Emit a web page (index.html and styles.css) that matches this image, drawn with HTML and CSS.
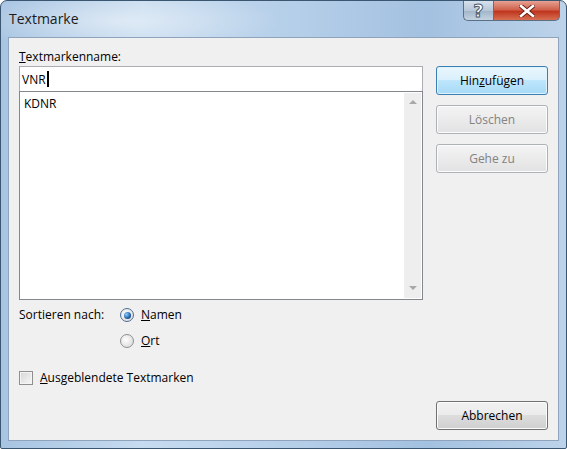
FILE: index.html
```html
<!DOCTYPE html>
<html lang="de">
<head>
  <meta charset="UTF-8" />
  <title>Textmarke</title>
  <link rel="stylesheet" href="styles.css">
</head>
<body>
  <div class="window">
    <div class="titlebar">
      <span class="title">Textmarke</span>
      <div class="caption">
        <span class="cap-btn help">?</span>
        <span class="cap-btn close">
          <svg width="16" height="12" viewBox="0 0 16 12">
            <path d="M2 1 L14 11 M14 1 L2 11" stroke="#6b1a10" stroke-width="4.4" stroke-linecap="square"/>
            <path d="M2 1 L14 11 M14 1 L2 11" stroke="#fff" stroke-width="2.6" stroke-linecap="square"/>
          </svg>
        </span>
      </div>
    </div>

    <div class="client">
      <div class="main">
        <label class="field-label"><u>T</u>extmarkenname:</label>
        <div class="name-input">VNR<span class="caret"></span></div>
        <div class="list">
          <div class="items">
            <div class="item">KDNR</div>
          </div>
          <div class="scrollbar">
            <span class="arrow up"></span>
            <span class="arrow down"></span>
          </div>
        </div>

        <div class="sort">
          <span class="sort-label">Sortieren nach:</span>
          <div class="radios">
            <div class="option"><span class="radio checked"></span><u>N</u>amen</div>
            <div class="option"><span class="radio"></span><u>O</u>rt</div>
          </div>
        </div>

        <div class="option hidden-marks"><span class="check"></span><u>A</u>usgeblendete Textmarken</div>
      </div>

      <div class="side">
        <button class="btn default">Hin<u>z</u>ufügen</button>
        <button class="btn" disabled>Löschen</button>
        <button class="btn" disabled>Gehe zu</button>
        <button class="btn cancel">Abbrechen</button>
      </div>
    </div>
  </div>
</body>
</html>
```

FILE: styles.css
```css
body {
  margin: 0;
  font-family: "Open Sans", "Noto Sans", sans-serif;
  font-size: 12px;
  color: #000;
  background: #fff;
}
.window {
  width: 567px;
  height: 449px;
  box-sizing: border-box;
  padding: 0 7px 7px 7px;
  display: flex;
  flex-direction: column;
  border: 1px solid #3b5670;
  border-radius: 7px 7px 2px 2px;
  background:
    radial-gradient(ellipse 160px 30px at 120px 20px, rgba(255,255,255,0.45), rgba(255,255,255,0) 100%),
    linear-gradient(to right, #a7c4e2 0%, #c6dbef 25%, #b3cde8 55%, #a3c1e0 75%, #bcd3ea 100%);
}
.titlebar {
  height: 36px;
  display: flex;
  justify-content: space-between;
  align-items: flex-start;
}
.title {
  margin: 8px 0 0 1px;
  font-size: 14px;
  color: #1b1b1b;
}
.caption {
  display: flex;
  margin-right: -1px;
}
.cap-btn {
  height: 19px;
  display: flex;
  align-items: center;
  justify-content: center;
  border: 1px solid #5c6f85;
  border-top: none;
}
.help {
  width: 29px;
  border-radius: 0 0 0 5px;
  border-right: none;
  background: linear-gradient(#d6e1ec, #b7c7d8 50%, #a1b4c8 51%, #c4d3e2);
  color: #fff;
  font-family: "DejaVu Sans", sans-serif;
  font-size: 18px;
  font-weight: bold;
  -webkit-text-stroke: 1px #4d5d6e;
}
.close {
  width: 65px;
  border-radius: 0 0 5px 0;
  background: linear-gradient(#e6a294, #d1624d 45%, #c0361f 55%, #d76f52);
}
.client {
  flex: 1;
  display: flex;
  background: #f0f0f0;
  border: 1px solid #8fa4bc;
  padding: 10px 0 0 10px;
}
.main {
  width: 404px;
  display: flex;
  flex-direction: column;
}
.field-label {
  display: block;
  height: 17px;
  line-height: 17px;
}
.name-input {
  height: 24px;
  line-height: 23px;
  margin-top: 1px;
  padding-left: 2px;
  background: #fff;
  border: 1px solid #abadb3;
  border-bottom: none;
  font-size: 12px;
  display: flex;
  align-items: center;
}
.caret {
  display: inline-block;
  width: 2px;
  height: 16px;
  background: #000;
  margin-left: 1px;
}
.list {
  height: 207px;
  display: flex;
  background: #fff;
  border: 1px solid #828790;
}
.items {
  flex: 1;
  padding: 3px 0 0 4px;
}
.item {
  line-height: 17px;
}
.scrollbar {
  width: 17px;
  margin: 1px 1px 1px 0;
  background: #eeeeee;
  display: flex;
  flex-direction: column;
  justify-content: space-between;
  align-items: center;
  padding: 7px 0 8px;
}
.arrow {
  width: 0;
  height: 0;
  border-left: 4px solid transparent;
  border-right: 4px solid transparent;
}
.arrow.up {
  border-bottom: 4px solid #a8a8a8;
}
.arrow.down {
  border-top: 4px solid #a8a8a8;
}
.sort {
  display: flex;
  margin-top: 0;
}
.sort-label {
  width: 101px;
  line-height: 18px;
  margin-top: 6px;
}
.radios {
  display: flex;
  flex-direction: column;
  gap: 8px;
  margin-top: 6px;
}
.option {
  display: flex;
  align-items: center;
  line-height: 18px;
}
.radio {
  width: 14px;
  height: 14px;
  box-sizing: border-box;
  border: 1px solid #8f8f8f;
  border-radius: 50%;
  background: radial-gradient(circle at 40% 40%, #fefefe, #d4d4d4);
  margin-right: 7px;
  display: flex;
  align-items: center;
  justify-content: center;
}
.radio.checked {
  border-color: #4f6f93;
}
.radio.checked::after {
  content: "";
  width: 7px;
  height: 7px;
  border-radius: 50%;
  background: radial-gradient(circle at 35% 35%, #8ed0ff, #1e5fa8 60%, #0f3c78);
}
.hidden-marks {
  margin-top: 19px;
}
.check {
  width: 14px;
  height: 14px;
  box-sizing: border-box;
  border: 1px solid #8f8f8f;
  background: linear-gradient(135deg, #d6d6d6, #f7f7f7);
  box-shadow: inset 0 0 0 1px #f4f4f4;
  margin-right: 7px;
}
.side {
  display: flex;
  flex-direction: column;
  align-items: flex-start;
  gap: 10px;
  padding: 18px 0 0 13px;
}
.btn {
  width: 112px;
  height: 29px;
  font-family: inherit;
  font-size: 12px;
  border: 1px solid #707070;
  border-radius: 3px;
  color: #000;
  background: linear-gradient(#f2f2f2 0%, #ebebeb 49%, #dddddd 50%, #cfcfcf 100%);
  box-shadow: inset 0 0 0 1px #fcfcfc;
  padding: 0;
}
.btn:disabled {
  color: #838383;
  border-color: #adb2b5;
  background: linear-gradient(#f4f4f4, #e2e2e2);
}
.btn.default {
  border-color: #3c7fb1;
  background: linear-gradient(#eaf6fd 0%, #d9f0fc 49%, #bee6fd 50%, #a7d9f5 100%);
  box-shadow: inset 0 0 0 1px #dff3fe;
}
.btn.cancel {
  margin-top: auto;
  margin-bottom: 10px;
}
```
